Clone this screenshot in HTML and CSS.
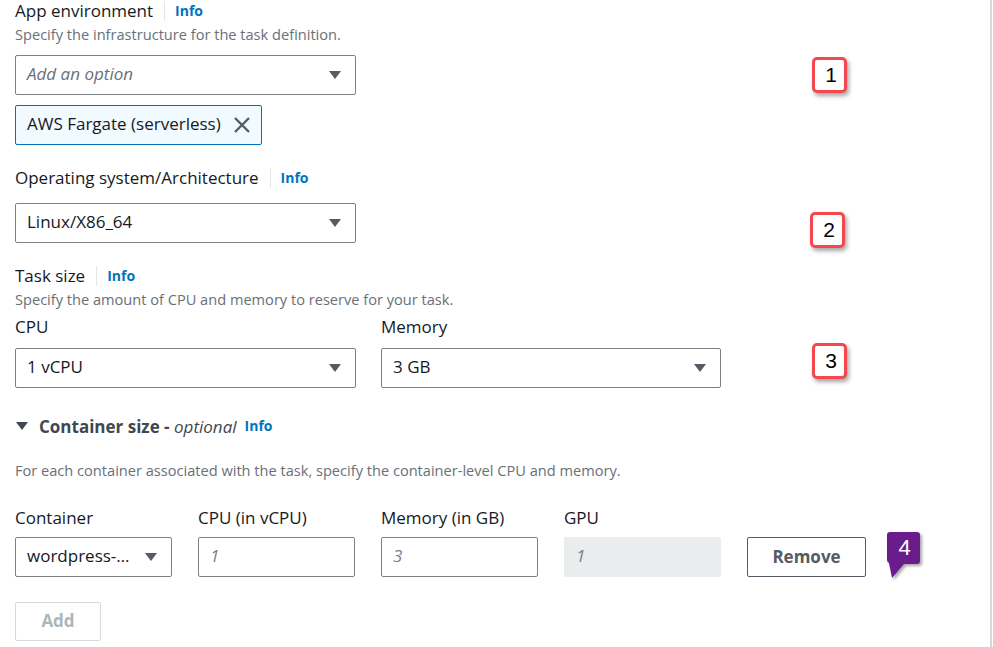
FILE: index.html
```html
<!DOCTYPE html>
<html>
<head>
<meta charset="utf-8">
<link rel="stylesheet" href="styles.css">
</head>
<body>
<div class="panel">
  <div class="form">
    <div class="label-row"><span class="label">App environment</span><span class="sep"></span><a class="info">Info</a></div>
    <div class="desc">Specify the infrastructure for the task definition.</div>
    <div class="select wide s-app"><span class="placeholder">Add an option</span><span class="caret"></span></div>
    <div class="token"><span>AWS Fargate (serverless)</span>
      <svg class="x" width="18" height="18" viewBox="0 0 18 18"><path d="M2 2 L16 16 M16 2 L2 16" stroke="#545b64" stroke-width="2.4" fill="none"/></svg>
    </div>

    <div class="label-row gap-l"><span class="label">Operating system/Architecture</span><span class="sep"></span><a class="info">Info</a></div>
    <div class="select wide s-os"><span>Linux/X86_64</span><span class="caret"></span></div>

    <div class="label-row gap-l"><span class="label">Task size</span><span class="sep"></span><a class="info">Info</a></div>
    <div class="desc">Specify the amount of CPU and memory to reserve for your task.</div>
    <div class="two-col">
      <div class="col">
        <div class="label sub">CPU</div>
        <div class="select"><span>1 vCPU</span><span class="caret"></span></div>
      </div>
      <div class="col">
        <div class="label sub">Memory</div>
        <div class="select"><span>3 GB</span><span class="caret"></span></div>
      </div>
    </div>

    <div class="expander"><span class="exp-caret"></span><span class="exp-title">Container size - <i>optional</i></span><a class="info">Info</a></div>
    <div class="desc desc-exp">For each container associated with the task, specify the container-level CPU and memory.</div>

    <div class="grid-row labels">
      <div class="label">Container</div>
      <div class="label">CPU (in vCPU)</div>
      <div class="label">Memory (in GB)</div>
      <div class="label">GPU</div>
      <div></div>
    </div>
    <div class="grid-row inputs">
      <div class="select small"><span>wordpress-…</span><span class="caret"></span></div>
      <div class="input"><span class="ph">1</span></div>
      <div class="input"><span class="ph">3</span></div>
      <div class="input disabled"><span class="ph">1</span></div>
      <div class="btn">Remove</div>
    </div>
    <div class="btn add">Add</div>
  </div>

  <div class="badge b1">1</div>
  <div class="badge b2">2</div>
  <div class="badge b3">3</div>
  <div class="badge4">
    <svg width="40" height="56" viewBox="0 0 40 56">
      <defs><filter id="sh" x="-30%" y="-30%" width="160%" height="160%"><feDropShadow dx="2" dy="2" stdDeviation="1.5" flood-color="#000" flood-opacity="0.35"/></filter></defs>
      <path d="M4 2 H31 Q34 2 34 5 V31 Q34 34 31 34 H18 L6 48 L3 33 Q1 32 1 30 V5 Q1 2 4 2 Z" fill="#6a1f8c" filter="url(#sh)"/>
    </svg>
    <span>4</span>
  </div>
</div>
</body>
</html>
```

FILE: styles.css
```css
* { box-sizing: border-box; }
html, body { margin: 0; padding: 0; background: #fff; }
body { font-family: "Open Sans", "Liberation Sans", Arial, sans-serif; color: #16191f; }

.panel {
  position: relative;
  width: 992px;
  height: 647px;
  border-right: 2px solid #d5d9dc;
  overflow: hidden;
}

.form { padding: 0 0 0 15px; }

.label-row { display: flex; align-items: center; height: 22px; }
.label { font-size: 17px; line-height: 22px; color: #16191f; }
.sep { width: 1px; height: 20px; background: #e3e6e8; margin: 0 10px 0 11px; }
.info { color: #0073bb; font-weight: 700; font-size: 14px; line-height: 22px; }
.gap-l { margin-top: 22px; }

.desc { font-size: 14.6px; line-height: 20px; color: #687078; margin-top: 2px; }

.select, .input {
  height: 40px;
  border: 1px solid #7b8187;
  border-radius: 2px;
  display: flex;
  align-items: center;
  padding: 0 14px 3px 11px;
  font-size: 17px;
  color: #16191f;
  background: #fff;
}
.select { justify-content: space-between; }
.select .caret { margin-top: 3px; }
.wide { width: 341px; }
.s-app { margin-top: 11px; }
.s-os { margin-top: 14px; }
.placeholder { font-style: italic; color: #687078; }
.caret {
  width: 0; height: 0;
  border-left: 6px solid transparent;
  border-right: 6px solid transparent;
  border-top: 8px solid #545b64;
}

.token {
  margin-top: 10px;
  width: 247px;
  height: 40px;
  border: 1px solid #0073bb;
  border-radius: 2px;
  background: #f1faff;
  display: flex;
  align-items: center;
  padding: 0 10px 3px 11px;
  font-size: 17px;
  justify-content: space-between;
}
.x { display: block; margin-top: 3px; }

.two-col { display: grid; grid-template-columns: 341px 340px; column-gap: 25px; margin-top: 7px; }
.col .select { margin-top: 10px; }

.expander { display: flex; align-items: center; height: 22px; margin-top: 27px; }
.exp-caret {
  width: 0; height: 0;
  border-left: 6px solid transparent;
  border-right: 6px solid transparent;
  border-top: 8px solid #414750;
  margin: 0 11px 0 1px;
}
.exp-title { font-weight: 700; font-size: 17px; color: #414750; margin-right: 8px; }
.exp-title i { font-weight: 400; }
.desc-exp { margin-top: 23px; }

.grid-row { display: grid; grid-template-columns: 157px 157px 157px 157px 119px; column-gap: 26px; }
.labels { margin-top: 27px; }
.inputs { margin-top: 8px; }
.small { padding-right: 14px; }
.ph { font-style: italic; color: #7b8187; }
.disabled { background: #eaeded; border-color: #eaeded; }
.btn {
  height: 40px;
  border: 1px solid #545b64;
  border-radius: 2px;
  display: flex;
  align-items: center;
  justify-content: center;
  padding-bottom: 2px;
  font-weight: 700;
  font-size: 17px;
  color: #545b64;
  background: #fff;
}
.add {
  margin-top: 25px;
  width: 86px;
  height: 39px;
  border-color: #d5dbdb;
  color: #aab7b8;
}

.badge {
  position: absolute;
  width: 35px;
  height: 36px;
  border: 3px solid #f5474d;
  border-radius: 5px;
  background: #fff;
  box-shadow: 2px 3px 4px rgba(0,0,0,0.35);
  font-family: "Liberation Sans", Arial, sans-serif;
  font-size: 21px;
  color: #000;
  display: flex;
  align-items: center;
  justify-content: center;
  padding-left: 3px;
}
.b1 { left: 812px; top: 57px; }
.b2 { left: 810px; top: 212px; }
.b3 { left: 812px; top: 343px; }

.badge4 { position: absolute; left: 886px; top: 530px; width: 40px; height: 56px; }
.badge4 svg { position: absolute; left: 0; top: 0; }
.badge4 span {
  position: absolute; left: 1px; top: 2px; width: 33px; height: 32px;
  display: flex; align-items: center; justify-content: center;
  color: #fff; font-family: "Liberation Sans", Arial, sans-serif; font-size: 22px;
  padding-left: 2px;
}
```
